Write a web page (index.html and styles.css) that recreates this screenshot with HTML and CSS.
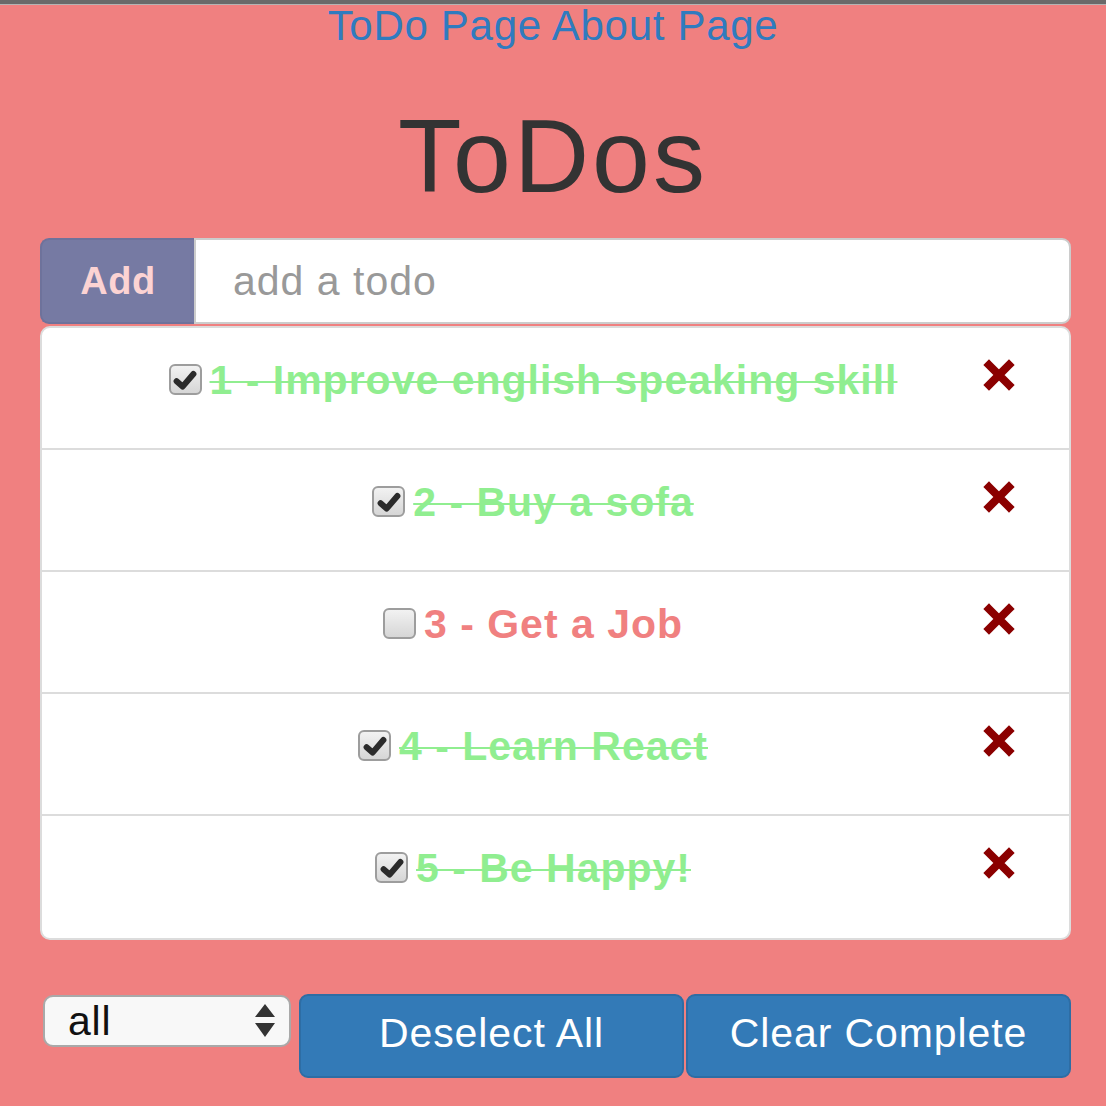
FILE: index.html
```html
<!DOCTYPE html>
<html lang="en">
<head>
<meta charset="utf-8">
<title>ToDos</title>
<link rel="stylesheet" href="styles.css">
</head>
<body>
<div class="topbar"></div>
<nav class="nav"><a href="#" class="nav-link">ToDo Page</a> <a href="#" class="nav-link">About Page</a></nav>
<h1 class="title">ToDos</h1>
<main class="wrap">
  <div class="input-group">
    <button class="add-btn">Add</button>
    <input class="todo-input" type="text" placeholder="add a todo">
  </div>
  <ul class="list">
    <li class="row">
      <div class="row-main"><span class="cb checked"><svg viewBox="0 0 20 20" class="tick"><path d="M3 11 L8 15.5 L17 5" /></svg></span><span class="label done">1 - Improve english speaking skill</span></div>
      <span class="remove"><svg viewBox="0 0 36 32"><path d="M8 6 L28 26 M28 6 L8 26"/></svg></span>
    </li>
    <li class="row">
      <div class="row-main"><span class="cb checked"><svg viewBox="0 0 20 20" class="tick"><path d="M3 11 L8 15.5 L17 5" /></svg></span><span class="label done">2 - Buy a sofa</span></div>
      <span class="remove"><svg viewBox="0 0 36 32"><path d="M8 6 L28 26 M28 6 L8 26"/></svg></span>
    </li>
    <li class="row">
      <div class="row-main"><span class="cb"></span><span class="label open">3 - Get a Job</span></div>
      <span class="remove"><svg viewBox="0 0 36 32"><path d="M8 6 L28 26 M28 6 L8 26"/></svg></span>
    </li>
    <li class="row">
      <div class="row-main"><span class="cb checked"><svg viewBox="0 0 20 20" class="tick"><path d="M3 11 L8 15.5 L17 5" /></svg></span><span class="label done">4 - Learn React</span></div>
      <span class="remove"><svg viewBox="0 0 36 32"><path d="M8 6 L28 26 M28 6 L8 26"/></svg></span>
    </li>
    <li class="row">
      <div class="row-main"><span class="cb checked"><svg viewBox="0 0 20 20" class="tick"><path d="M3 11 L8 15.5 L17 5" /></svg></span><span class="label done">5 - Be Happy!</span></div>
      <span class="remove"><svg viewBox="0 0 36 32"><path d="M8 6 L28 26 M28 6 L8 26"/></svg></span>
    </li>
  </ul>
  <div class="footer">
    <div class="select"><span class="select-text">all</span><svg class="arrows" viewBox="0 0 20 34"><path d="M10 0 L20 13 L0 13 Z M0 19 L20 19 L10 33 Z"/></svg></div>
    <button class="btn">Deselect All</button>
    <button class="btn">Clear Complete</button>
  </div>
</main>
</body>
</html>
```

FILE: styles.css
```css
* { box-sizing: border-box; }
html, body { margin: 0; padding: 0; }
body {
  background: #f08080;
  font-family: "Liberation Sans", Arial, sans-serif;
  font-size: 41px;
  letter-spacing: 0.8px;
  color: #333;
  height: 1106px;
  overflow: hidden;
}
.topbar {
  height: 5px;
  background: #6a6a6a;
  border-bottom: 1px solid #b4b4b4;
}
.nav {
  text-align: center;
  line-height: 46px;
  height: 46px;
  font-size: 42px;
  letter-spacing: 0.7px;
  margin-top: -2px;
}
.nav-link { color: #2f7bbf; text-decoration: none; }
.title {
  margin: 51px 0 0;
  text-align: center;
  font-size: 104px;
  font-weight: normal;
  line-height: 112px;
  letter-spacing: 3px;
  color: #333;
  height: 112px;
}
.wrap {
  margin: 26px 35px 0 40px;
}
.input-group {
  display: flex;
  height: 86px;
}
.add-btn {
  width: 154px;
  height: 86px;
  background: #767aa3;
  border: 2px solid #6e729b;
  border-right: none;
  border-radius: 9px 0 0 9px;
  color: #fcd3d3;
  font-family: inherit;
  font-size: 38px;
  font-weight: bold;
  letter-spacing: 0.5px;
  padding: 0;
  margin: 0;
}
.todo-input {
  flex: 1;
  height: 86px;
  border: 2px solid #cccccc;
  border-radius: 0 9px 9px 0;
  background: #fff;
  font-family: inherit;
  font-size: 41px;
  letter-spacing: 1px;
  padding: 0 0 0 37px;
  margin: 0;
  outline: none;
}
.todo-input::placeholder { color: #999; }
.list {
  list-style: none;
  margin: 2px 0 0;
  padding: 0;
  background: #fff;
  border: 2px solid #dcdcdc;
  border-radius: 10px;
}
.row {
  display: flex;
  align-items: flex-start;
  height: 122px;
  padding-top: 28px;
  border-bottom: 2px solid #dcdcdc;
}
.row:last-child { border-bottom: none; }
.row-main {
  flex: 1;
  display: flex;
  justify-content: center;
  align-items: flex-start;
  line-height: 48px;
  font-weight: bold;
  letter-spacing: 1px;
}
.cb {
  width: 33px;
  height: 31px;
  margin-top: 8px;
  margin-right: 8px;
  border: 2px solid #9d9d9d;
  border-radius: 6px;
  background: linear-gradient(#f2f2f2, #d6d6d6);
  display: flex;
  align-items: center;
  justify-content: center;
  flex: none;
}
.tick { width: 24px; height: 24px; }
.tick path { fill: none; stroke: #2b2b2b; stroke-width: 5; stroke-linecap: round; stroke-linejoin: round; }
.label.done { color: #90ee90; text-decoration: line-through; text-decoration-thickness: 2px; }
.label.open { color: #f08080; }
.remove {
  width: 36px;
  height: 32px;
  margin-top: 3px;
  margin-left: -43px;
  margin-right: 52px;
  flex: none;
  display: block;
}
.remove svg { width: 36px; height: 32px; display: block; }
.remove path { stroke: #8b0000; stroke-width: 8; stroke-linecap: square; fill: none; }
.footer {
  display: flex;
  align-items: flex-start;
  margin-top: 54px;
  gap: 2px;
}
.select {
  width: 248px;
  height: 52px;
  margin: 1px 6px 0 3px;
  background: #f8f8f8;
  border: 2px solid #a9a9a9;
  border-radius: 10px;
  display: flex;
  align-items: center;
  justify-content: space-between;
  padding: 0 14px 0 23px;
  line-height: 48px;
  color: #111;
}
.arrows { width: 20px; height: 34px; fill: #333; }
.btn {
  flex: 1;
  height: 84px;
  background: #337ab7;
  border: 2px solid #2e6da4;
  border-radius: 9px;
  color: #fff;
  font-family: inherit;
  font-size: 41px;
  letter-spacing: 0.9px;
  padding: 0 0 6px;
  margin: 0;
}
```
